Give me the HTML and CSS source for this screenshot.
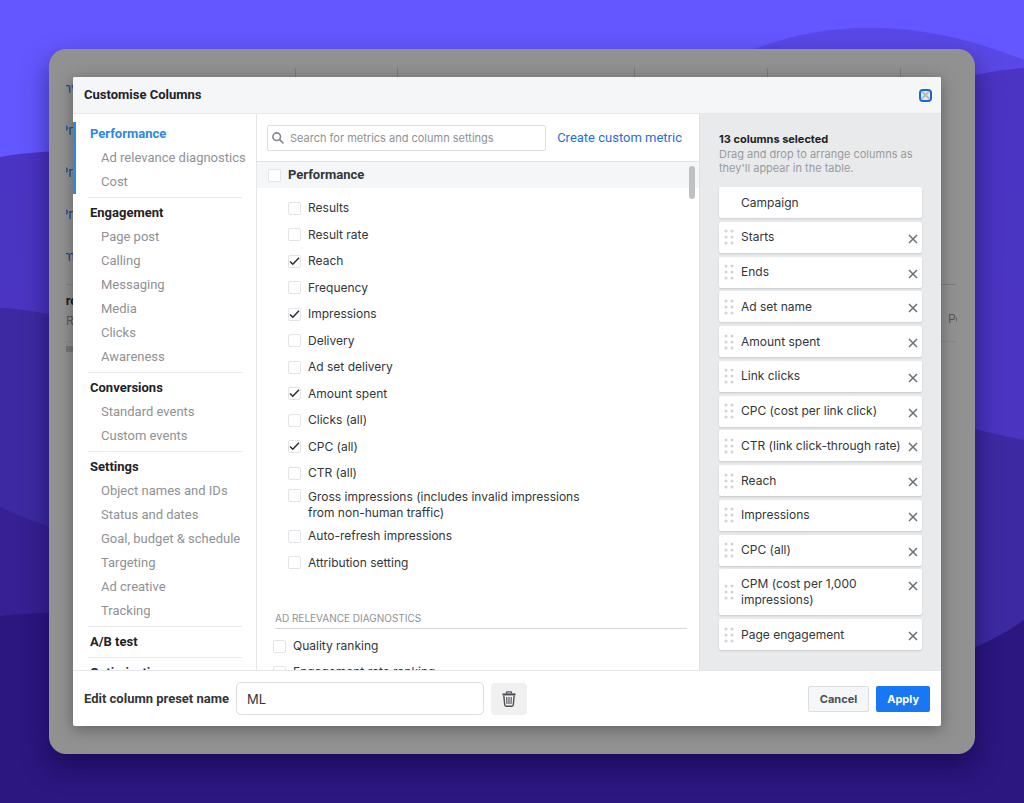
FILE: index.html
```
<!DOCTYPE html>
<html lang="en">
<head>
  <meta charset="UTF-8" />
  <meta name="viewport" content="width=device-width, initial-scale=1.0" />
  <title>Customise Columns</title>
  <link rel="stylesheet" href="styles.css">
</head>
<body>
  <svg class="waves" viewBox="0 0 1024 803" preserveAspectRatio="none" aria-hidden="true">
    <defs>
      <linearGradient id="mid" x1="0" y1="0" x2="0" y2="1">
        <stop offset="0" stop-color="#4b34c4" />
        <stop offset="1" stop-color="#4a35bd" />
      </linearGradient>
    </defs>
    <rect width="1024" height="803" fill="#6457ff" />
    <path d="M740 55 Q870 -2 1024 60 V120 H740Z" fill="#5a48e6" />
    <path d="M0 157 Q60 145 300 150 L860 110 Q960 72 1024 68 V803 H0Z" fill="url(#mid)" />
    <path d="M0 308 Q40 308 120 335 L900 405 Q960 428 1024 440 V803 H0Z" fill="#3d2aa2" />
    <path d="M0 507 Q50 530 120 548 L900 640 V803 H0Z" fill="#372093" />
    <path d="M0 616 Q50 610 120 614 L900 672 Q980 652 1024 620 V803 H0Z" fill="#2c1680" />
  </svg>

  <main class="frame">
    <div class="backdrop" aria-hidden="true">
      <div class="ticks"><span></span><span></span><span></span><span></span><span></span><span></span></div>
      <div class="backdrop-rows">
        <p>Inv</p>
        <p>Pro</p>
        <p>Pro</p>
        <p>Pro</p>
        <p>Imp</p>
      </div>
      <div class="backdrop-total">
        <div><b>Pro</b><br>Re</div>
        <div>Per</div>
      </div>
      <div class="backdrop-scroll"></div>
    </div>

    <div class="modal" role="dialog" aria-labelledby="title">
      <header class="modal-header">
        <h1 id="title">Customise Columns</h1>
        <button class="close" aria-label="Close">
          <svg width="10" height="10" viewBox="0 0 10 10"><path d="M1 1l8 8M9 1L1 9" stroke="#b4b8be" stroke-width="2" /></svg>
        </button>
      </header>

      <div class="modal-body">
        <nav class="nav">
          <div class="group active">
            <a class="head" href="#">Performance</a>
            <a href="#">Ad relevance diagnostics</a>
            <a href="#">Cost</a>
          </div>
          <hr>
          <div class="group">
            <a class="head" href="#">Engagement</a>
            <a href="#">Page post</a>
            <a href="#">Calling</a>
            <a href="#">Messaging</a>
            <a href="#">Media</a>
            <a href="#">Clicks</a>
            <a href="#">Awareness</a>
          </div>
          <hr>
          <div class="group">
            <a class="head" href="#">Conversions</a>
            <a href="#">Standard events</a>
            <a href="#">Custom events</a>
          </div>
          <hr>
          <div class="group">
            <a class="head" href="#">Settings</a>
            <a href="#">Object names and IDs</a>
            <a href="#">Status and dates</a>
            <a href="#">Goal, budget &amp; schedule</a>
            <a href="#">Targeting</a>
            <a href="#">Ad creative</a>
            <a href="#">Tracking</a>
          </div>
          <hr>
          <div class="group">
            <a class="head" href="#">A/B test</a>
          </div>
          <hr>
          <div class="group">
            <a class="head" href="#">Optimisation</a>
          </div>
        </nav>

        <section class="metrics">
          <div class="toolbar">
            <label class="search">
              <svg width="12" height="12" viewBox="0 0 12 12" fill="none" stroke="#85888d" stroke-width="1.6"><circle cx="4.7" cy="4.7" r="3.8" /><path d="M7.4 7.4l4 4" /></svg>
              <input type="text" placeholder="Search for metrics and column settings" aria-label="Search for metrics and column settings">
            </label>
            <a class="create" href="#">Create custom metric</a>
          </div>
          <div class="metric-scroll">
            <label class="check section"><input type="checkbox"><span>Performance</span></label>
            <div class="metric-list">
              <label class="check"><input type="checkbox"><span>Results</span></label>
              <label class="check"><input type="checkbox"><span>Result rate</span></label>
              <label class="check"><input type="checkbox" checked><span>Reach</span></label>
              <label class="check"><input type="checkbox"><span>Frequency</span></label>
              <label class="check"><input type="checkbox" checked><span>Impressions</span></label>
              <label class="check"><input type="checkbox"><span>Delivery</span></label>
              <label class="check"><input type="checkbox"><span>Ad set delivery</span></label>
              <label class="check"><input type="checkbox" checked><span>Amount spent</span></label>
              <label class="check"><input type="checkbox"><span>Clicks (all)</span></label>
              <label class="check"><input type="checkbox" checked><span>CPC (all)</span></label>
              <label class="check"><input type="checkbox"><span>CTR (all)</span></label>
              <label class="check two-line"><input type="checkbox"><span>Gross impressions (includes invalid impressions from non-human traffic)</span></label>
              <label class="check"><input type="checkbox"><span>Auto-refresh impressions</span></label>
              <label class="check"><input type="checkbox"><span>Attribution setting</span></label>
            </div>
            <h2>AD RELEVANCE DIAGNOSTICS</h2>
            <div class="metric-sub">
              <label class="check"><input type="checkbox"><span>Quality ranking</span></label>
              <label class="check"><input type="checkbox"><span>Engagement rate ranking</span></label>
            </div>
            <div class="thumb"></div>
          </div>
        </section>

        <aside class="selected">
          <h2>13 columns selected</h2>
          <p>Drag and drop to arrange columns as they'll appear in the table.</p>
          <ul id="columns"></ul>
        </aside>
      </div>

      <footer class="modal-footer">
        <label for="preset">Edit column preset name</label>
        <input id="preset" type="text" value="ML">
        <button class="trash" aria-label="Delete preset">
          <svg width="14" height="16" viewBox="0 0 14 16" fill="none" stroke="#4b4f54"><path d="M4.5 2.5V1.6q0-.8.8-.8h3.4q.8 0 .8.8v.9" stroke-width="1.3" /><path d="M.5 3.4h13" stroke-width="2" /><path d="M1.8 4.5l.9 9.3q.1 1.4 1.5 1.4h5.6q1.4 0 1.5-1.4l.9-9.3" stroke-width="1.4" /><path d="M4.7 6l.3 7M7 6v7M9.3 6l-.3 7" stroke-width="1.1" /></svg>
        </button>
        <button class="btn cancel">Cancel</button>
        <button class="btn apply">Apply</button>
      </footer>
    </div>
  </main>

  <script>
    const columns = [
      "Campaign", "Starts", "Ends", "Ad set name", "Amount spent", "Link clicks",
      "CPC (cost per link click)", "CTR (link click-through rate)", "Reach",
      "Impressions", "CPC (all)", "CPM (cost per 1,000 impressions)", "Page engagement"
    ];
    const grip = '<svg class="grip" width="10" height="16" viewBox="0 0 10 16" fill="#d3d5d8">' +
      [2, 8, 14].map(y => `<circle cx="2" cy="${y}" r="1.6"/><circle cx="8" cy="${y}" r="1.6"/>`).join("") + '</svg>';
    const cross = '<svg width="10" height="10" viewBox="0 0 10 10"><path d="M1 1l8 8M9 1L1 9" stroke="#6b6e72" stroke-width="1.5"/></svg>';

    // Campaign is pinned: no grip and no remove button
    document.getElementById("columns").innerHTML = columns.map((name, i) =>
      i === 0
        ? `<li class="pinned"><span>${name}</span></li>`
        : `<li>${grip}<span>${name}</span><button class="remove" aria-label="Remove ${name}">${cross}</button></li>`
    ).join("");
  </script>
</body>
</html>
```
FILE: styles.css
```
* {
  box-sizing: border-box;
}
body {
  margin: 0;
  padding: 49px;
  position: relative;
  background: #2c1680;
  font-family: Inter, "Liberation Sans", sans-serif;
  font-size: 13px;
  line-height: 16px;
  color: #333639;
}
h1, h2, p, ul {
  margin: 0;
  padding: 0;
}
a {
  text-decoration: none;
}
button, input {
  font-family: inherit;
  font-size: inherit;
  color: inherit;
  margin: 0;
}
button {
  display: flex;
  align-items: center;
  justify-content: center;
  padding: 0;
  border: none;
  cursor: pointer;
}
.waves {
  position: absolute;
  top: 0;
  left: 0;
  width: 100%;
  height: 100%;
}
.frame {
  position: relative;
  padding: 28px 34px 28px 24px;
  background: #919191;
  border-radius: 17px;
  box-shadow: 0 12px 26px rgba(10, 0, 50, 0.5);
}

/* dimmed table behind the dialog */
.backdrop {
  position: absolute;
  top: 19px;
  left: 17px;
  right: 18px;
  overflow: hidden;
  color: #12438a;
}
.ticks {
  display: grid;
  grid-template-columns: 229px 102px 237px 133px 133px 1fr;
  height: 9px;
}
.ticks span + span {
  border-left: 1px solid #7c7c7c;
}
.backdrop-rows {
  margin-top: -10px;
}
.backdrop-rows p {
  line-height: 42px;
  text-indent: -6px;
}
.backdrop-total {
  display: flex;
  justify-content: space-between;
  height: 58px;
  margin-top: 7px;
  padding-top: 6px;
  border-top: 1px solid #7f7f7f;
  border-bottom: 1px solid #888;
  color: #55575a;
  font-size: 12px;
  line-height: 20px;
  text-indent: -8px;
}
.backdrop-total b {
  color: #17191c;
}
.backdrop-total div + div {
  width: 9px;
  padding-top: 18px;
  text-indent: 0;
}
.backdrop-scroll {
  width: 40px;
  height: 6px;
  margin-top: 4px;
  background: #777;
}

.modal {
  position: relative;
  background: #fff;
  border-radius: 2px;
  box-shadow: 0 3px 16px rgba(0, 0, 0, 0.35);
}
.modal-header {
  display: flex;
  align-items: center;
  justify-content: space-between;
  height: 37px;
  padding: 0 9px 0 11px;
  background: #f5f6f8;
  border-bottom: 1px solid #e6e8eb;
  border-radius: 2px 2px 0 0;
}
.modal-header h1 {
  font: bold 13px/16px Roboto, sans-serif;
  color: #1f2226;
}
.close {
  width: 13px;
  height: 13px;
  background: #e4e9f0;
  border: 2px solid #1a6bc4;
  border-radius: 4px;
}
.modal-body {
  display: grid;
  grid-template-columns: 184px 1fr 242px;
}

.nav {
  contain: size;
  overflow: hidden;
  padding-top: 8px;
  border-right: 1px solid #e4e6e9;
  font-family: Roboto, sans-serif;
}
.group {
  padding-left: 14px;
  border-left: 3px solid transparent;
}
.group.active {
  border-color: #2d88e8;
}
.group a {
  display: block;
  padding-left: 11px;
  line-height: 24px;
  color: #8f9194;
  white-space: nowrap;
}
.group .head {
  padding-left: 0;
  font-weight: bold;
  color: #1f2226;
}
.group.active .head {
  color: #2d88e8;
}
.nav hr {
  margin: 3px 14px 3px 15px;
  border: none;
  border-top: 1px solid #e8e9eb;
}

.metrics {
  contain: size;
  overflow: hidden;
  display: flex;
  flex-direction: column;
}
.toolbar {
  display: flex;
  align-items: center;
  gap: 11px;
  height: 48px;
  flex-shrink: 0;
  padding: 0 17px 0 10px;
  border-bottom: 1px solid #e0e2e5;
}
.search {
  display: flex;
  flex: 1;
  align-items: center;
  gap: 6px;
  height: 26px;
  padding: 0 4px;
  border: 1px solid #dcdee1;
  border-radius: 2px;
}
.search input {
  flex: 1;
  min-width: 0;
  padding: 0;
  border: none;
  outline: none;
  font-size: 11px;
}
.search input::placeholder {
  color: #8f9194;
}
.create {
  color: #1f6fd6;
  font: 13px/16px Roboto, sans-serif;
}
.metric-scroll {
  position: relative;
  font-size: 12px;
}
.check {
  display: flex;
  align-items: center;
  gap: 7px;
  min-height: 26px;
}
.check input {
  appearance: none;
  flex-shrink: 0;
  width: 13px;
  height: 13px;
  background: #fff;
  border: 1px solid #e2e4e7;
  border-radius: 2px;
}
.check input:checked {
  background: #fff url("data:image/svg+xml,%3Csvg xmlns='http://www.w3.org/2000/svg' viewBox='0 0 11 11'%3E%3Cpath d='M1 5.5l2.8 2.8L10 1.8' fill='none' stroke='%232b2d30' stroke-width='1.5'/%3E%3C/svg%3E") center / 11px 11px no-repeat;
}
.section {
  padding-left: 11px;
  background: #f5f6f8;
  font: bold 13px/16px Roboto, sans-serif;
}
.metric-list {
  display: grid;
  min-height: 381px;
  margin-top: 7px;
  padding-left: 31px;
}
.metric-list span {
  max-width: 290px;
}
.two-line {
  align-items: flex-start;
  padding: 2px 0;
}
.metrics h2 {
  margin: 34px 12px 4px 18px;
  padding-bottom: 2px;
  border-bottom: 1px solid #d5d7da;
  font-size: 10px;
  font-weight: normal;
  color: #8f9194;
}
.metric-sub {
  padding-left: 16px;
}
.thumb {
  position: absolute;
  top: 4px;
  right: 4px;
  width: 6px;
  height: 33px;
  background: #c1c1c1;
  border-radius: 3px;
}

.selected {
  padding: 18px 19px 20px;
  background: #e9eaec;
  border-left: 1px solid #dfe0e3;
}
.selected h2 {
  font-size: 11px;
  line-height: 15px;
  color: #1f2226;
}
.selected p {
  font-size: 11px;
  line-height: 14px;
  color: #999b9f;
}
.selected ul {
  display: grid;
  align-content: space-between;
  min-height: 463px;
  margin-top: 12px;
  list-style: none;
}
.selected li {
  display: flex;
  align-items: center;
  gap: 7px;
  min-height: 31px;
  padding: 7px 4px 7px 5px;
  background: #fff;
  border-radius: 2px;
  box-shadow: 0 1px 2px rgba(0, 0, 0, 0.14);
  font-size: 12px;
}
.selected li span {
  flex: 1;
}
.selected .pinned {
  padding-left: 22px;
}
.remove {
  align-self: flex-start;
  height: 17px;
  padding-top: 3px;
  background: none;
}

.modal-footer {
  display: flex;
  align-items: center;
  gap: 7px;
  height: 56px;
  padding: 0 11px;
  border-top: 1px solid #e4e6e9;
}
.modal-footer label {
  font: bold 13px/16px Roboto, sans-serif;
}
.modal-footer input {
  width: 248px;
  height: 33px;
  padding: 0 10px;
  border: 1px solid #dcdee1;
  border-radius: 5px;
}
.trash {
  width: 36px;
  height: 32px;
  background: #f0f0f1;
  border-radius: 4px;
}
.btn {
  height: 26px;
  padding: 0 11px;
  border-radius: 2px;
  font-size: 11px;
  font-weight: bold;
}
.cancel {
  margin-left: auto;
  background: #f5f6f8;
  border: 1px solid #dcdee1;
  color: #4b4f54;
}
.apply {
  background: #1877f2;
  color: #fff;
}
```
